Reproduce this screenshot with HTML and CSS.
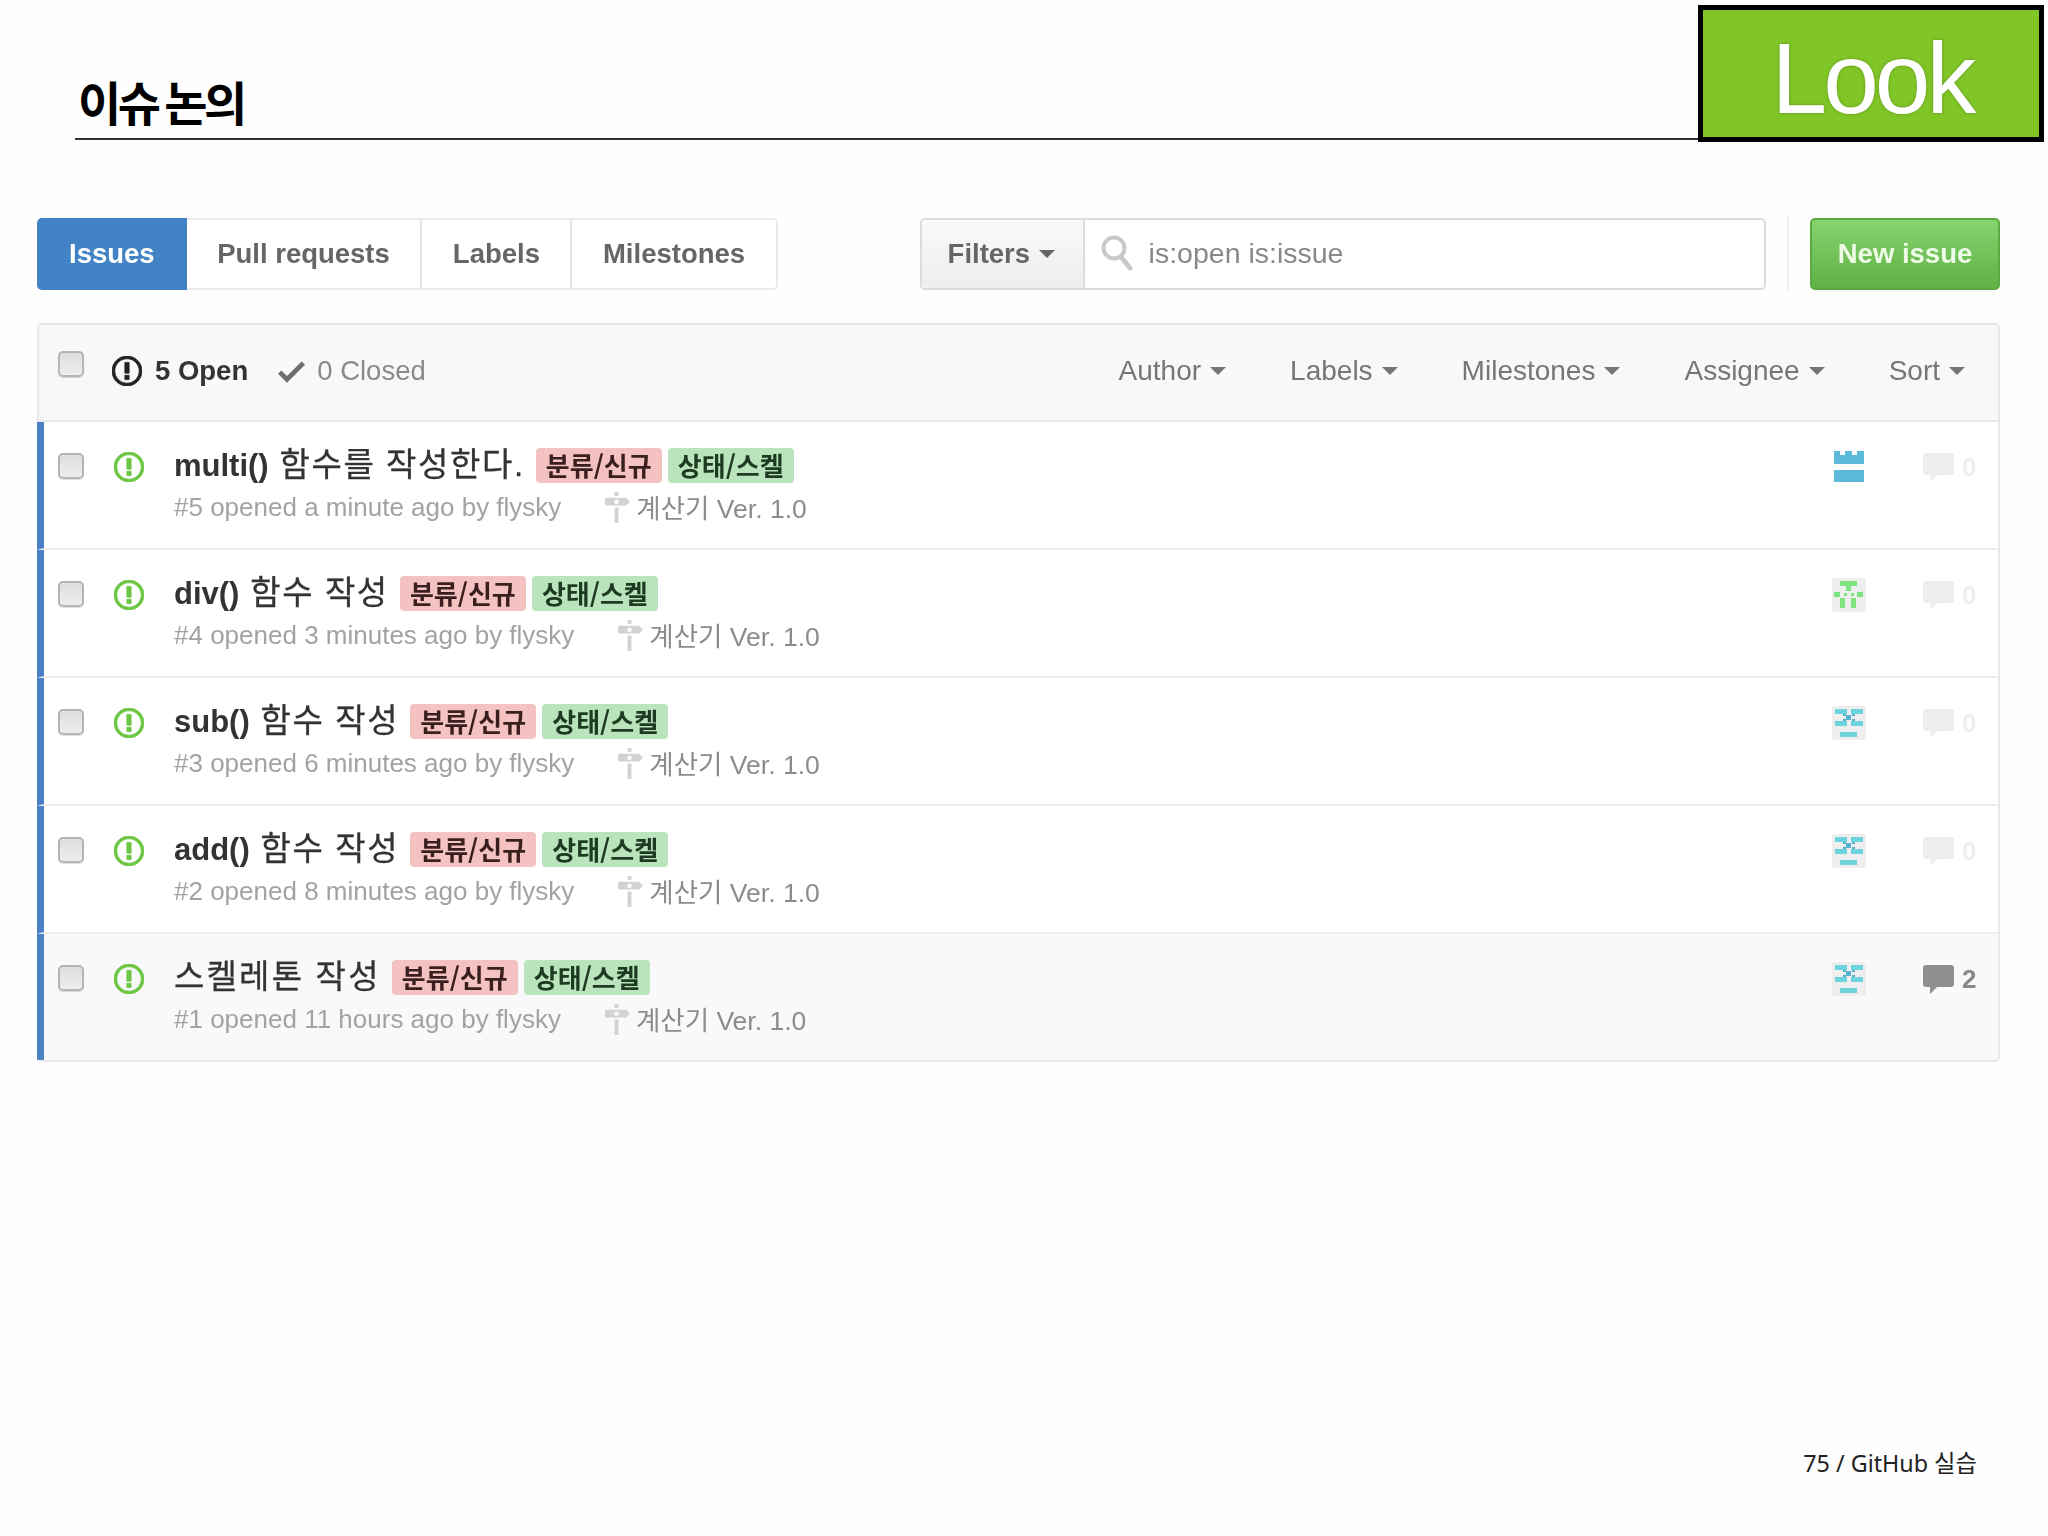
FILE: index.html
```html
<!DOCTYPE html>
<html lang="ko">
<head>
<meta charset="utf-8">
<title>이슈 논의</title>
<link rel="stylesheet" href="styles.css">
</head>
<body>
<svg class="defs" width="0" height="0" aria-hidden="true">
  <symbol id="i-issue" viewBox="0 0 14 14"><path d="M7 1.3c3.14 0 5.7 2.56 5.7 5.7s-2.56 5.7-5.7 5.7A5.71 5.71 0 0 1 1.3 7c0-3.14 2.56-5.7 5.7-5.7zM7 0C3.14 0 0 3.14 0 7s3.14 7 7 7 7-3.14 7-7-3.14-7-7-7zm1 3H6v5h2V3zm0 6H6v2h2V9z"/></symbol>
  <symbol id="i-check" viewBox="0 0 12 10"><path d="M12 2l-8 8-4-4 1.5-1.5L4 7l6.5-6.5L12 2z"/></symbol>
  <symbol id="i-milestone" viewBox="0 0 14 16"><path d="M8 2H6V0h2v2zm4 5H2c-.55 0-1-.45-1-1V4c0-.55.45-1 1-1h10l2 2-2 2zM8 4H6v2h2V4zM6 16h2V8H6v8z"/></symbol>
  <symbol id="i-comment" viewBox="0 0 31 29"><path d="M3 0h25a3 3 0 0 1 3 3v16a3 3 0 0 1-3 3H14l-7 7v-7H3a3 3 0 0 1-3-3V3a3 3 0 0 1 3-3z"/></symbol>
  <symbol id="a-castle" viewBox="0 0 34 34"><path fill="#5cb9d9" d="M2 1h6v4h5V1h7v4h5V1h7v13H2zM2 20h30v12H2z"/></symbol>
  <symbol id="a-green" viewBox="0 0 34 34"><rect width="34" height="34" rx="2" fill="#eeeeee"/><path fill="#7fe381" d="M8 3h17v5h-6v5h-5V8H8zM2 14h6v5H2zM25 14h6v5h-6zM8 20h5v10H8zM19 20h5v10h-5zM12 15h3v3h-3zM19 15h3v3h-3z"/></symbol>
  <symbol id="a-teal" viewBox="0 0 34 34"><rect width="34" height="34" rx="2" fill="#eeeeee"/><path fill="#6fd3de" d="M3 3h12v5H3zM19 3h12v5H19zM3 15h12v5H3zM19 15h12v5H19zM8 26h17v5H8z"/><path fill="#55b5d0" d="M14 9h5v5h-5zM11 8h3v2h-3zM20 8h3v2h-3zM11 13h3v2h-3zM20 13h3v2h-3z"/></symbol>
</svg>

<div class="slide">
  <header class="head">
    <h1 class="head-title">이슈 논의</h1>
  </header>
  <div class="look">Look</div>

  <main class="board">
    <div class="toolbar">
      <nav class="tabs">
        <a class="tab tab-active">Issues</a>
        <a class="tab">Pull requests</a>
        <a class="tab">Labels</a>
        <a class="tab">Milestones</a>
      </nav>
      <div class="search">
        <span class="filters">Filters<i class="caret"></i></span>
        <span class="query">
          <svg class="search-icon" viewBox="0 0 32 36"><circle cx="13" cy="13" r="10.5" fill="none" stroke="#c9c9c9" stroke-width="4"/><path d="M20 22l9 11" stroke="#c9c9c9" stroke-width="5" stroke-linecap="round"/></svg>
          is:open is:issue
        </span>
      </div>
      <span class="divider"></span>
      <a class="new-issue">New issue</a>
    </div>

    <section class="table">
      <div class="table-head">
        <input class="check" type="checkbox">
        <span class="state state-open"><svg class="ic-issue"><use href="#i-issue"/></svg>5 Open</span>
        <span class="state state-closed"><svg class="ic-check"><use href="#i-check"/></svg>0 Closed</span>
        <div class="sorts">
          <span class="sort">Author<i class="caret"></i></span>
          <span class="sort">Labels<i class="caret"></i></span>
          <span class="sort">Milestones<i class="caret"></i></span>
          <span class="sort">Assignee<i class="caret"></i></span>
          <span class="sort">Sort<i class="caret"></i></span>
        </div>
      </div>

      <article class="row">
        <input class="check" type="checkbox">
        <svg class="ic-issue ic-open"><use href="#i-issue"/></svg>
        <div class="body">
          <div class="line"><span class="name"><b>multi()</b> 함수를 작성한다.</span><span class="label label-red">분류/신규</span><span class="label label-green">상태/스켈</span></div>
          <div class="meta"><span class="opened">#5 opened a minute ago by flysky</span><svg class="ic-ms"><use href="#i-milestone"/></svg><span class="ms">계산기 Ver. 1.0</span></div>
        </div>
        <svg class="avatar"><use href="#a-castle"/></svg>
        <span class="comments"><svg class="ic-comment"><use href="#i-comment"/></svg>0</span>
      </article>

      <article class="row">
        <input class="check" type="checkbox">
        <svg class="ic-issue ic-open"><use href="#i-issue"/></svg>
        <div class="body">
          <div class="line"><span class="name"><b>div()</b> 함수 작성</span><span class="label label-red">분류/신규</span><span class="label label-green">상태/스켈</span></div>
          <div class="meta"><span class="opened">#4 opened 3 minutes ago by flysky</span><svg class="ic-ms"><use href="#i-milestone"/></svg><span class="ms">계산기 Ver. 1.0</span></div>
        </div>
        <svg class="avatar"><use href="#a-green"/></svg>
        <span class="comments"><svg class="ic-comment"><use href="#i-comment"/></svg>0</span>
      </article>

      <article class="row">
        <input class="check" type="checkbox">
        <svg class="ic-issue ic-open"><use href="#i-issue"/></svg>
        <div class="body">
          <div class="line"><span class="name"><b>sub()</b> 함수 작성</span><span class="label label-red">분류/신규</span><span class="label label-green">상태/스켈</span></div>
          <div class="meta"><span class="opened">#3 opened 6 minutes ago by flysky</span><svg class="ic-ms"><use href="#i-milestone"/></svg><span class="ms">계산기 Ver. 1.0</span></div>
        </div>
        <svg class="avatar"><use href="#a-teal"/></svg>
        <span class="comments"><svg class="ic-comment"><use href="#i-comment"/></svg>0</span>
      </article>

      <article class="row">
        <input class="check" type="checkbox">
        <svg class="ic-issue ic-open"><use href="#i-issue"/></svg>
        <div class="body">
          <div class="line"><span class="name"><b>add()</b> 함수 작성</span><span class="label label-red">분류/신규</span><span class="label label-green">상태/스켈</span></div>
          <div class="meta"><span class="opened">#2 opened 8 minutes ago by flysky</span><svg class="ic-ms"><use href="#i-milestone"/></svg><span class="ms">계산기 Ver. 1.0</span></div>
        </div>
        <svg class="avatar"><use href="#a-teal"/></svg>
        <span class="comments"><svg class="ic-comment"><use href="#i-comment"/></svg>0</span>
      </article>

      <article class="row row-hover">
        <input class="check" type="checkbox">
        <svg class="ic-issue ic-open"><use href="#i-issue"/></svg>
        <div class="body">
          <div class="line"><span class="name name-wide">스켈레톤 작성</span><span class="label label-red">분류/신규</span><span class="label label-green">상태/스켈</span></div>
          <div class="meta"><span class="opened">#1 opened 11 hours ago by flysky</span><svg class="ic-ms"><use href="#i-milestone"/></svg><span class="ms">계산기 Ver. 1.0</span></div>
        </div>
        <svg class="avatar"><use href="#a-teal"/></svg>
        <span class="comments comments-on"><svg class="ic-comment"><use href="#i-comment"/></svg>2</span>
      </article>
    </section>
  </main>

  <footer class="foot">75 / GitHub 실습</footer>
</div>
</body>
</html>
```
FILE: styles.css
```css
* { box-sizing: border-box; }

html, body { margin: 0; padding: 0; background: #fefefe; }

.defs { position: absolute; }

.slide {
  position: relative;
  display: flex;
  flex-direction: column;
  width: 2048px;
  height: 1536px;
  overflow: hidden;
  font-family: "Liberation Sans", "Noto Sans CJK KR", sans-serif;
}

.head {
  display: flex;
  align-items: flex-end;
  width: 1624px;
  height: 140px;
  margin-left: 75px;
  padding: 0 0 11px 3px;
  border-bottom: 2px solid #333;
}

.head-title {
  margin: 0;
  font: 700 47px/1.1 "Noto Sans CJK KR", sans-serif;
  letter-spacing: -3.5px;
  word-spacing: -3px;
  color: #000;
}

.look {
  position: absolute;
  top: 5px;
  left: 1698px;
  display: flex;
  align-items: center;
  justify-content: center;
  width: 346px;
  height: 137px;
  padding: 8px 0 0 2px;
  border: 5px solid #000;
  background: #80c627;
  color: #fff;
  font: 400 100px/1 "Liberation Sans", sans-serif;
  letter-spacing: -4px;
  text-shadow: 0 0 3px rgba(60, 90, 20, .5);
}

.board {
  padding: 0 48px 0 37px;
  filter: blur(.5px);
}

.toolbar {
  display: flex;
  align-items: stretch;
  height: 72px;
  margin-top: 78px;
  font-size: 27.5px;
}

.tabs {
  display: flex;
  margin-right: 142px;
  border: 2px solid #eaeaea;
  border-radius: 5px;
  background: #fff;
}

.tab {
  display: flex;
  align-items: center;
  padding: 0 30.5px;
  border-left: 2px solid #e6e6e6;
  color: #666;
  font-weight: 700;
}

.tab-active {
  margin: -2px 0 -2px -2px;
  padding: 0 32px;
  border-left: 0;
  border-radius: 5px 0 0 5px;
  background: #4183c4;
  color: #fff;
}

.tab-active + .tab { border-left: 0; }

.search {
  display: flex;
  flex: 1;
  border: 2px solid #dcdcdc;
  border-radius: 5px;
  background: #fff;
}

.filters {
  display: flex;
  align-items: center;
  gap: 9px;
  width: 163px;
  padding-left: 26px;
  border-right: 2px solid #dcdcdc;
  background: linear-gradient(#fafafa, #ededed);
  border-radius: 5px 0 0 5px;
  color: #666;
  font-weight: 700;
}

.caret {
  display: inline-block;
  width: 0;
  height: 0;
  border: 8px solid transparent;
  border-top: 8px solid currentColor;
  border-bottom: 0;
}

.query {
  display: flex;
  align-items: center;
  gap: 16px;
  flex: 1;
  padding: 0 0 2px 16px;
  color: #888;
  font-size: 28.5px;
}

.search-icon { width: 32px; height: 36px; }

.divider {
  width: 2px;
  margin: -2px 21px 0 21px;
  background: #f0f0f0;
}

.new-issue {
  display: flex;
  align-items: center;
  justify-content: center;
  width: 190px;
  border: 2px solid #5ca941;
  border-radius: 5px;
  background: linear-gradient(#86d370, #60b044);
  color: #eefbe6;
  font-weight: 700;
}

.table {
  margin-top: 33px;
  border: 2px solid #e8e8e8;
  border-radius: 5px;
  font-size: 27.5px;
}

.table-head {
  display: flex;
  align-items: flex-start;
  height: 97px;
  padding: 26px 0 0 19px;
  background: #f8f8f8;
  border-bottom: 2px solid #e8e8e8;
  border-radius: 5px 5px 0 0;
}

.check {
  appearance: none;
  flex: none;
  width: 26px;
  height: 26px;
  margin: 0;
  border: 2px solid #b5b5b5;
  border-radius: 5px;
  background: linear-gradient(#dedede, #eeeeee);
  box-shadow: 0 1px 1px rgba(0, 0, 0, .15);
}

.state {
  display: flex;
  align-items: center;
  height: 34px;
  margin-top: 3px;
}

.state-open {
  gap: 13px;
  margin-left: 28px;
  color: #333;
  font-weight: 700;
}

.state-closed {
  gap: 12px;
  margin-left: 30px;
  color: #8a8a8a;
}

.ic-issue { width: 30px; height: 30px; fill: #222; stroke: #222; stroke-width: .35; }
.ic-check { width: 27px; height: 23px; fill: #6e6e6e; }

.sorts {
  display: flex;
  gap: 64px;
  margin-left: auto;
  padding: 3px 33px 0 0;
  color: #767676;
  font-size: 28px;
  line-height: 34px;
}

.sort {
  display: flex;
  align-items: center;
  gap: 9px;
}

.row {
  display: flex;
  align-items: flex-start;
  height: 128px;
  margin-left: -2px;
  padding: 31px 0 0 14px;
  border-left: 7px solid #4a82c4;
  border-bottom: 2px solid #eeeeee;
  background: #fff;
}

.row:last-child { border-bottom: 0; height: 126px; }

.row-hover { background: #f9f8fa; }

.ic-open {
  flex: none;
  margin: -1px 0 0 30px;
  fill: #6cc644;
  stroke: #6cc644;
}

.body {
  flex: 1;
  margin-left: 30px;
  margin-top: -6px;
}

.line {
  display: flex;
  align-items: center;
  gap: 6px;
  height: 36px;
}

.name {
  margin-right: 5px;
  color: #333;
  font: 400 33px/36px "Liberation Sans", "Noto Sans CJK KR", sans-serif;
  letter-spacing: 1.6px;
  white-space: nowrap;
  -webkit-text-stroke: .3px #333;
}

.name b { font-size: 31px; letter-spacing: 0; -webkit-text-stroke: 0; }

.name-wide { margin-right: 5px; letter-spacing: 2.2px; }

.label {
  display: flex;
  align-items: center;
  justify-content: center;
  width: 126px;
  height: 35px;
  border-radius: 4px;
  font: 700 26px/1 "Noto Sans CJK KR", sans-serif;
}

.label-red { background: #f5c2c2; color: #3a1f1f; }
.label-green { background: #bae4bb; color: #1e3a22; }

.meta {
  display: flex;
  align-items: center;
  height: 40px;
  margin-top: 4px;
  color: #a3a3a3;
  font-size: 26px;
}

.ic-ms {
  width: 27px;
  height: 31px;
  margin-left: 42px;
  fill: #d2d2d2;
}

.ms {
  margin: -2px 0 0 6px;
  color: #8c8c8c;
  font-size: 26.5px;
}

.avatar {
  flex: none;
  width: 34px;
  height: 34px;
  margin-top: -3px;
}

.comments {
  display: flex;
  align-items: center;
  gap: 8px;
  width: 111px;
  height: 30px;
  margin: -1px 21px 0 0;
  padding-left: 57px;
  color: #eeeeee;
  font-weight: 700;
  font-size: 26px;
  fill: #eeeeee;
}

.comments-on { color: #888; fill: #8f8f8f; }

.ic-comment { flex: none; width: 31px; height: 29px; }

.foot {
  margin-top: auto;
  padding: 0 71px 57px 0;
  text-align: right;
  color: #222;
  font: 400 23.3px/32px "Noto Sans", "Noto Sans CJK KR", sans-serif;
}
```
